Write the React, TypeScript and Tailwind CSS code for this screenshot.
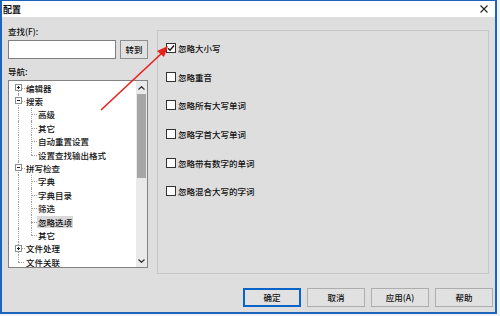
import React from 'react';

type TreeRow = {
  label: string;
  level: 0 | 1;
  exp?: '+' | '-';
  first?: boolean;
  last?: boolean;
  selected?: boolean;
};

const tree: TreeRow[] = [
  { label: '编辑器', level: 0, exp: '+', first: true },
  { label: '搜索', level: 0, exp: '-' },
  { label: '高级', level: 1 },
  { label: '其它', level: 1 },
  { label: '自动重置设置', level: 1 },
  { label: '设置查找输出格式', level: 1, last: true },
  { label: '拼写检查', level: 0, exp: '-' },
  { label: '字典', level: 1 },
  { label: '字典目录', level: 1 },
  { label: '筛选', level: 1 },
  { label: '忽略选项', level: 1, selected: true },
  { label: '其它', level: 1, last: true },
  { label: '文件处理', level: 0, exp: '+' },
  { label: '文件关联', level: 0, last: true },
];

const options = [
  { label: '忽略大小写', checked: true },
  { label: '忽略重音', checked: false },
  { label: '忽略所有大写单词', checked: false },
  { label: '忽略字首大写单词', checked: false },
  { label: '忽略带有数字的单词', checked: false },
  { label: '忽略混合大写的字词', checked: false },
];

function Row({ row }: { row: TreeRow }) {
  const dot = 'absolute border-dotted border-[#a0a0a0]';
  return (
    <div className="relative h-[13.4px] flex items-center">
      {/* top level trunk line */}
      {row.level === 0 && row.first && <span className={`${dot} left-[9px] top-1/2 bottom-0 border-l`} />}
      {row.level === 0 && row.last && <span className={`${dot} left-[9px] top-0 h-1/2 border-l`} />}
      {!row.first && !(row.level === 0 && row.last) && <span className={`${dot} left-[9px] top-0 bottom-0 border-l`} />}

      {row.level === 0 && !row.exp && <span className={`${dot} left-[9px] w-[6px] top-1/2 border-t`} />}
      {row.level === 0 && row.exp && (
        <>
          <span className={`${dot} left-[13px] w-[3px] top-1/2 border-t`} />
          <span className="absolute left-[6px] top-[3px] w-[7px] h-[7px] bg-white border border-[#8e8e8e] flex items-center justify-center">
            <span className="absolute w-[3px] h-px bg-[#222]" />
            {row.exp === '+' && <span className="absolute w-px h-[3px] bg-[#222]" />}
          </span>
        </>
      )}

      {row.level === 1 && (
        <>
          <span className={`${dot} left-[22px] top-0 border-l ${row.last ? 'h-1/2' : 'bottom-0'}`} />
          <span className={`${dot} left-[22px] w-[6px] top-1/2 border-t`} />
        </>
      )}

      <span
        className={`${row.level === 0 ? 'ml-[16px]' : 'ml-[28px]'} px-px leading-[10px] ${
          row.selected ? 'bg-[#d9d9d9] py-px' : ''
        }`}
      >
        {row.label}
      </span>
    </div>
  );
}

function Button({ label, focused }: { label: string; focused?: boolean }) {
  return (
    <div
      className={`h-[19px] w-[58px] flex items-center justify-center bg-[#e1e1e1] ${
        focused ? 'border-2 border-[#0a64c8]' : 'border border-[#adadad]'
      }`}
    >
      {label}
    </div>
  );
}

export default function App() {
  return (
    <div className="w-[500px] h-[316px] bg-[#f2f2f2] relative overflow-hidden text-[8.5px] font-medium text-[#111] font-['Noto_Sans_CJK_SC',sans-serif]">
      <div className="w-[497px] h-[314px] border-t border-l-2 border-r-2 border-b-2 border-[#1d64be] bg-[#dedede] flex flex-col">
        {/* title bar */}
        <div className="h-[16px] bg-white flex items-center justify-between pl-[1px] pr-[6px]">
          <span className="text-[9px] font-bold leading-none">配置</span>
          <svg width="8" height="8" viewBox="0 0 8 8" className="mr-[1px]">
            <path d="M0.5 0.5 L7.5 7.5 M7.5 0.5 L0.5 7.5" stroke="#222" strokeWidth="1.1" />
          </svg>
        </div>

        {/* body */}
        <div className="flex-1 flex flex-col">
          <div className="flex">
            {/* left column */}
            <div className="ml-[6px] w-[140px] flex flex-col">
              <div className="mt-[9px] h-[10px] leading-[10px]">查找(F):</div>
              <div className="mt-[4px] flex gap-[4px]">
                <div className="h-[19px] w-[108px] bg-white border border-[#7f7f7f]" />
                <div className="h-[19px] w-[28px] bg-[#e1e1e1] border border-[#8f8f8f] flex items-center justify-center">
                  转到
                </div>
              </div>
              <div className="mt-[7px] h-[10px] leading-[10px]">导航:</div>
              <div className="mt-[4px] h-[188px] bg-white border border-[#828282] flex">
                <div className="flex-1 overflow-hidden">
                  {tree.map((r, i) => (
                    <Row key={i} row={r} />
                  ))}
                </div>
                {/* scrollbar */}
                <div className="w-[11px] bg-[#eaeaea] flex flex-col">
                  <div className="h-[13px] flex items-center justify-center">
                    <svg width="7" height="4" viewBox="0 0 7 4">
                      <path d="M0.5 3.5 L3.5 0.7 L6.5 3.5" stroke="#333" strokeWidth="1.2" fill="none" />
                    </svg>
                  </div>
                  <div className="mx-[1px] h-[84px] bg-[#a6a6a6]" />
                  <div className="flex-1" />
                  <div className="h-[13px] flex items-center justify-center">
                    <svg width="7" height="4" viewBox="0 0 7 4">
                      <path d="M0.5 0.5 L3.5 3.3 L6.5 0.5" stroke="#333" strokeWidth="1.2" fill="none" />
                    </svg>
                  </div>
                </div>
              </div>
            </div>

            {/* right panel */}
            <div className="ml-[9px] mt-[13px] w-[332px] h-[244px] border border-[#c6c6c6] flex flex-col pt-[3px] pl-[8px]">
              {options.map((o) => (
                <div key={o.label} className="h-[28.6px] flex items-center gap-[2px]">
                  <span className="w-[10px] h-[10px] bg-white border border-[#333] flex items-center justify-center">
                    {o.checked && (
                      <svg width="8" height="8" viewBox="0 0 8 8">
                        <path d="M1 4.2 L3 6.2 L7 1.5" stroke="#111" strokeWidth="1.3" fill="none" />
                      </svg>
                    )}
                  </span>
                  <span className="leading-[10px]">{o.label}</span>
                </div>
              ))}
            </div>
          </div>

          {/* buttons */}
          <div className="mt-[14px] flex justify-end gap-[6px] pr-[2px]">
            <Button label="确定" focused />
            <Button label="取消" />
            <Button label="应用(A)" />
            <Button label="帮助" />
          </div>
        </div>
      </div>

      {/* red annotation arrow */}
      <svg className="absolute left-0 top-0 pointer-events-none" width="500" height="316">
        <line x1="101" y1="110" x2="162" y2="53" stroke="#e8201c" strokeWidth="1.6" />
        <polygon points="168,46 157,51 164,57" fill="#e8201c" />
      </svg>
    </div>
  );
}
